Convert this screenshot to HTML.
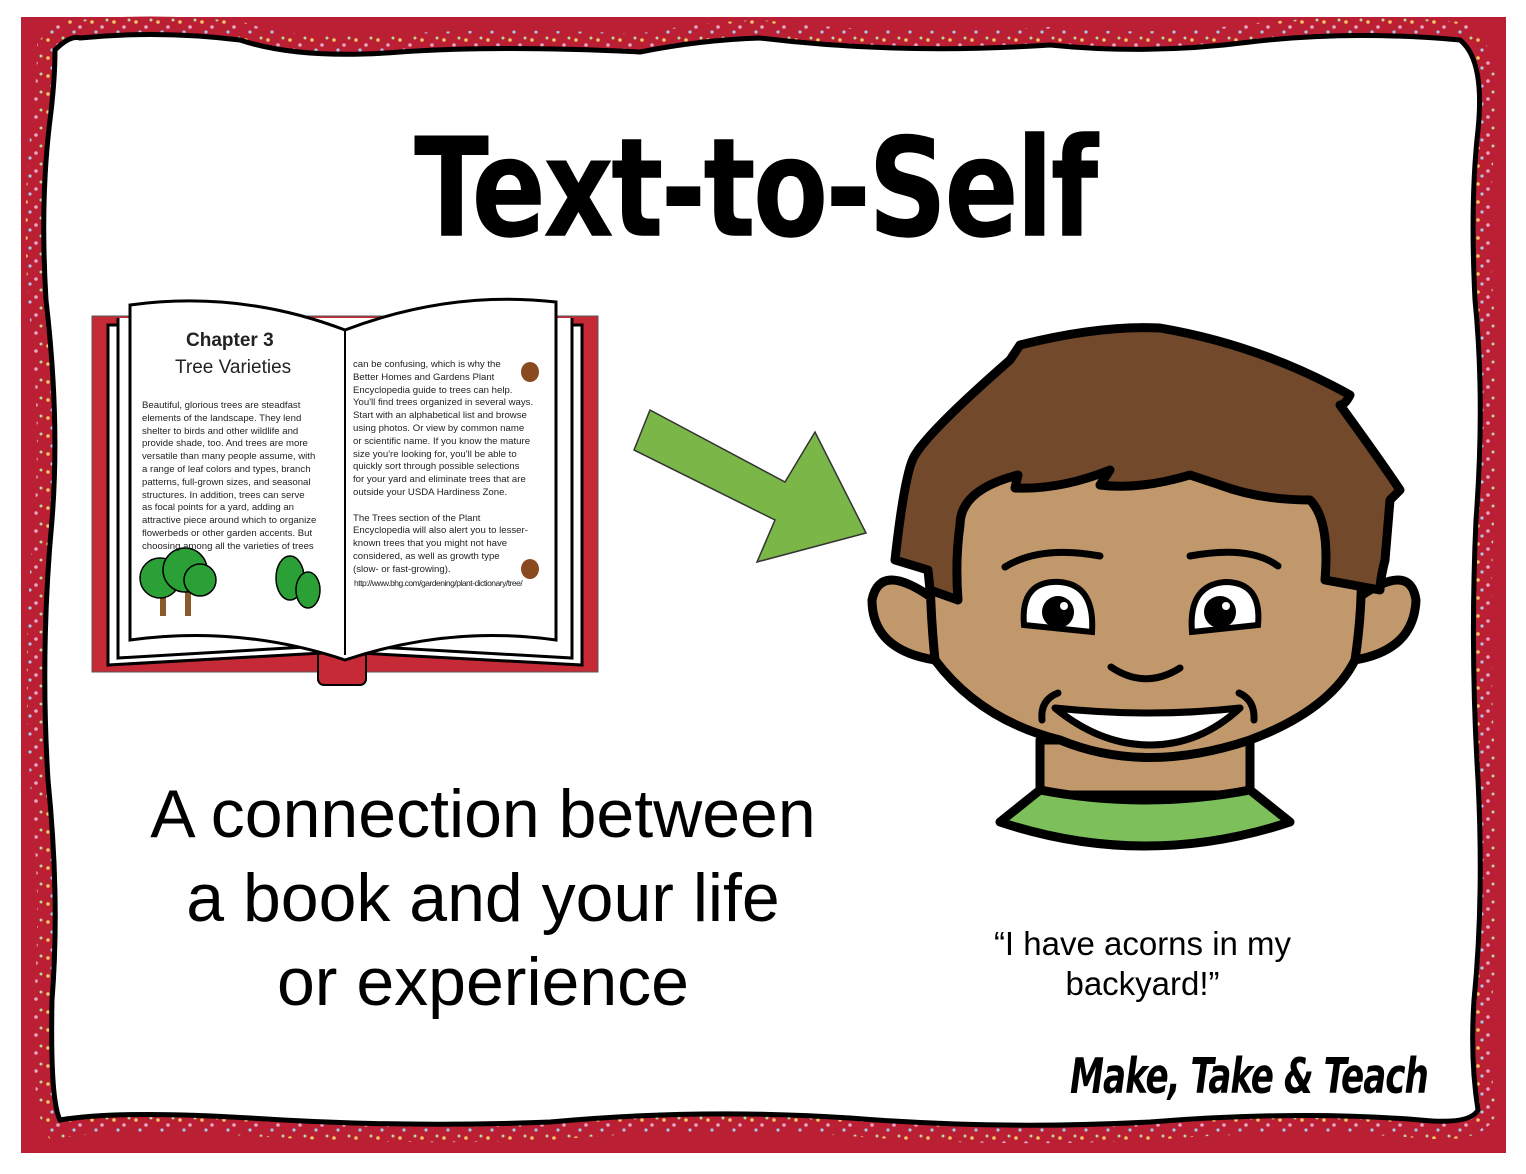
<!DOCTYPE html>
<html><head><meta charset="utf-8"><style>
html,body{margin:0;padding:0;background:#fff;}
body{width:1526px;height:1174px;position:relative;overflow:hidden;font-family:"Liberation Sans",sans-serif;}
.t{position:absolute;white-space:nowrap;}
</style></head><body>
<svg width="1526" height="1174" viewBox="0 0 1526 1174" style="position:absolute;left:0;top:0">
<defs>
<pattern id="dots" width="22" height="18" patternUnits="userSpaceOnUse">
<rect width="22" height="18" fill="#bb1f33"/>
<circle cx="4" cy="4" r="1.8" fill="#f6c766"/><circle cx="14" cy="9" r="1.8" fill="#e9a6c6"/><circle cx="8" cy="14" r="1.6" fill="#a8c8e8"/><circle cx="19" cy="2" r="1.5" fill="#b8d89a"/>
</pattern>
<path id="bd" d="M55 50 Q70 35 80 38 Q160 30 240 40 Q300 60 400 52 Q500 45 640 52 Q700 40 760 38 Q900 55 1050 45 Q1150 55 1250 42 Q1350 30 1460 40 Q1485 60 1478 130 Q1470 200 1475 300 Q1485 400 1476 520 Q1470 650 1478 780 Q1484 900 1474 1000 Q1470 1060 1478 1110 Q1470 1125 1420 1120 Q1300 1110 1150 1122 Q1000 1130 850 1118 Q700 1108 550 1122 Q400 1128 250 1118 Q120 1110 60 1120 Q50 1100 52 1000 Q60 900 48 780 Q40 650 52 520 Q60 420 46 300 Q40 200 50 120 Q55 80 55 50 Z"/>
</defs>
<rect x="21" y="17" width="1485" height="1136" fill="#bb1f33"/>
<use href="#bd" fill="none" stroke="url(#dots)" stroke-width="36"/>
<use href="#bd" fill="#fff" stroke="#000" stroke-width="5"/>

<!-- book -->
<rect x="92" y="316" width="506" height="356" fill="#c62a36" stroke="#555" stroke-width="1"/>
<rect x="318" y="650" width="48" height="35" rx="6" fill="#c62a36" stroke="#000" stroke-width="2"/>
<path d="M108 325 L108 665 L340 652 L582 665 L582 325 Z" fill="#fff" stroke="#000" stroke-width="3"/>
<path d="M118 318 L118 658 L340 645 L572 658 L572 318" fill="#fff" stroke="#000" stroke-width="3"/>
<path d="M130 305 Q240 290 345 330 Q450 290 556 302 L556 640 Q450 625 345 660 Q240 625 130 640 Z" fill="#fff" stroke="#000" stroke-width="3"/>
<line x1="345" y1="330" x2="345" y2="655" stroke="#000" stroke-width="2"/>
<g fill="#8a5a2a"><rect x="160" y="590" width="6" height="26"/><rect x="185" y="590" width="6" height="26"/></g>
<g fill="#2aa036" stroke="#000" stroke-width="1.5">
<circle cx="160" cy="578" r="20"/><circle cx="185" cy="570" r="22"/><circle cx="200" cy="580" r="16"/>
<ellipse cx="290" cy="578" rx="14" ry="22"/><ellipse cx="308" cy="590" rx="12" ry="18"/>
</g>
<g fill="#8a4a20"><ellipse cx="530" cy="372" rx="9" ry="10"/><ellipse cx="530" cy="569" rx="9" ry="10"/></g>

<!-- arrow -->
<path d="M634 450 L650 410 L785 482 L815 432 L866 533 L757 562 L775 520 Z" fill="#7ab648" stroke="#333" stroke-width="1.5"/>

<!-- face -->
<g stroke="#000" stroke-width="9" stroke-linejoin="round" stroke-linecap="round">
<path d="M1040 740 L1040 795 L1250 795 L1250 740 Z" fill="#c1976c"/>
<path d="M1040 790 Q1145 810 1250 790 L1290 822 Q1145 870 1000 822 Z" fill="#7cbf5b"/>
<path d="M935 600 Q880 560 872 600 Q872 650 935 660 Z" fill="#c1976c"/>
<path d="M1355 600 Q1410 560 1416 600 Q1414 650 1355 660 Z" fill="#c1976c"/>
<path d="M935 470 Q925 560 935 660 Q980 720 1060 740 Q1145 775 1250 740 Q1330 710 1355 660 Q1370 560 1350 470 Q1250 380 1145 390 Q1000 390 935 470 Z" fill="#c1976c"/>
<path d="M915 455 Q930 430 1010 360 Q1020 345 1020 345 Q1100 325 1160 328 Q1260 345 1350 395 Q1345 405 1340 405 Q1380 460 1400 490 Q1390 500 1390 500 L1385 560 Q1380 580 1380 590 L1325 580 Q1330 520 1310 500 Q1260 500 1220 485 Q1190 475 1190 475 Q1140 490 1100 485 L1110 470 Q1060 490 1015 488 L1018 475 Q960 490 960 525 Q955 560 958 600 L930 590 L928 570 L895 560 Q905 470 915 455 Z" fill="#724a2b"/>
</g>
<g fill="none" stroke="#000" stroke-width="7" stroke-linecap="round">
<path d="M1005 567 Q1040 545 1100 556"/>
<path d="M1190 556 Q1250 545 1278 566"/>
<path d="M1111 667 Q1145 690 1180 668"/>
<path d="M1058 693 Q1040 700 1042 720"/>
<path d="M1239 693 Q1255 700 1254 720"/>
</g>
<path d="M1055 708 Q1150 718 1240 708 Q1200 745 1150 745 Q1100 745 1055 708 Z" fill="#fff" stroke="#000" stroke-width="7" stroke-linejoin="round"/>
<g stroke="#000" stroke-width="6">
<path d="M1024 625 Q1020 580 1060 582 Q1095 585 1092 632 Z" fill="#fff"/>
<path d="M1192 632 Q1188 585 1225 582 Q1262 582 1258 625 Z" fill="#fff"/>
</g>
<circle cx="1058" cy="612" r="16" fill="#000"/><circle cx="1220" cy="612" r="16" fill="#000"/>
<circle cx="1064" cy="606" r="4" fill="#fff"/><circle cx="1226" cy="606" r="4" fill="#fff"/>
</svg>

<div class="t" style="left:414px;top:107px;font-size:110px;line-height:130px;font-weight:bold;font-family:'DejaVu Sans',sans-serif;letter-spacing:-3px;transform:scaleY(1.25);transform-origin:left top">Text-to-Self</div>

<div class="t" style="left:186px;top:330px;font-size:19px;font-weight:bold;color:#222">Chapter 3</div>
<div class="t" style="left:175px;top:357px;font-size:19px;color:#222">Tree Varieties</div>
<div class="t" style="left:142px;top:400px;font-size:9.6px;line-height:12.8px;color:#222">Beautiful, glorious trees are steadfast<br>elements of the landscape. They lend<br>shelter to birds and other wildlife and<br>provide shade, too. And trees are more<br>versatile than many people assume, with<br>a range of leaf colors and types, branch<br>patterns, full-grown sizes, and seasonal<br>structures. In addition, trees can serve<br>as focal points for a yard, adding an<br>attractive piece around which to organize<br>flowerbeds or other garden accents. But<br>choosing among all the varieties of trees</div>
<div class="t" style="left:353px;top:359px;font-size:9.6px;line-height:12.8px;color:#222">can be confusing, which is why the<br>Better Homes and Gardens Plant<br>Encyclopedia guide to trees can help.<br>You'll find trees organized in several ways.<br>Start with an alphabetical list and browse<br>using photos. Or view by common name<br>or scientific name. If you know the mature<br>size you're looking for, you'll be able to<br>quickly sort through possible selections<br>for your yard and eliminate trees that are<br>outside your USDA Hardiness Zone.<br><br>The Trees section of the Plant<br>Encyclopedia will also alert you to lesser-<br>known trees that you might not have<br>considered, as well as growth type<br>(slow- or fast-growing).</div>
<div class="t" style="left:354px;top:578px;font-size:8.5px;color:#222;letter-spacing:-0.5px">http://www.bhg.com/gardening/plant-dictionary/tree/</div>

<div class="t" style="left:0;width:966px;top:772px;text-align:center;font-size:68px;line-height:84px">A connection between<br>a book and your life<br>or experience</div>
<div class="t" style="left:985px;top:924px;font-size:33px;line-height:40px;text-align:center;width:315px;white-space:normal">“I have acorns in my backyard!”</div>
<div class="t" style="left:1070px;top:1050px;font-size:38px;line-height:40px;font-weight:bold;font-style:italic;font-family:'DejaVu Sans Condensed','DejaVu Sans',sans-serif;letter-spacing:-1px;transform:scaleY(1.3);transform-origin:left top">Make, Take &amp; Teach</div>
</body></html>
